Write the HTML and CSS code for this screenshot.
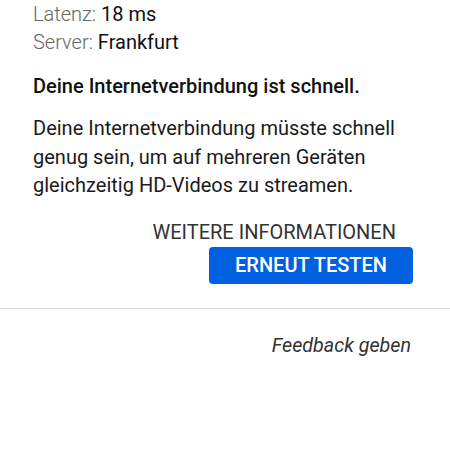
FILE: index.html
```html
<!DOCTYPE html>
<html>
<head>
<meta charset="utf-8">
<link rel="stylesheet" href="styles.css">
</head>
<body>
<div class="page">
  <div class="section">
    <div class="stats">
      <div class="stat"><span class="label">Latenz:</span> <span class="value">18 ms</span></div>
      <div class="stat"><span class="label">Server:</span> <span class="value">Frankfurt</span></div>
    </div>
    <p class="headline">Deine Internetverbindung ist schnell.</p>
    <p class="desc">Deine Internetverbindung müsste schnell genug sein, um auf mehreren Geräten gleichzeitig HD-Videos zu streamen.</p>
    <div class="actions">
      <button class="link-btn">WEITERE INFORMATIONEN</button>
      <button class="primary-btn">ERNEUT TESTEN</button>
    </div>
  </div>
  <hr class="divider">
  <div class="footer">
    <span class="feedback">Feedback geben</span>
  </div>
</div>
</body>
</html>
```
FILE: styles.css
```css
html, body {
  margin: 0;
  padding: 0;
  background: #fff;
}
body {
  font-family: Roboto, "Liberation Sans", sans-serif;
  color: #212121;
}
.page {
  width: 450px;
}
.section {
  padding: 0 37px 0 33px;
}
.stat {
  font-size: 20px;
  line-height: 28px;
}
.label {
  color: #666;
  font-weight: 300;
}
.value {
  color: #111;
}
.headline {
  margin: 16px 0 0;
  font-size: 20px;
  font-weight: 500;
  line-height: 28px;
  color: #111;
}
.desc {
  margin: 14px 0 0;
  font-size: 20px;
  line-height: 28.5px;
  color: #1a1a1a;
}
.actions {
  display: flex;
  flex-direction: column;
  align-items: flex-end;
  margin-top: 20px;
}
.link-btn {
  background: none;
  border: none;
  padding: 0;
  margin-right: 17px;
  font-family: inherit;
  font-size: 20px;
  line-height: 24px;
  color: #333;
}
.primary-btn {
  margin-top: 3px;
  width: 204px;
  height: 37px;
  background: #0061e0;
  border: none;
  border-radius: 4px;
  font-family: inherit;
  font-size: 20px;
  font-weight: 500;
  color: #fff;
}
.divider {
  margin: 24px 0 0;
  border: none;
  border-top: 1px solid #dcdcdc;
}
.footer {
  display: flex;
  justify-content: flex-end;
  padding: 24px 39px 0 0;
}
.feedback {
  font-size: 19.7px;
  font-style: italic;
  color: #333;
  line-height: 26px;
}
```
